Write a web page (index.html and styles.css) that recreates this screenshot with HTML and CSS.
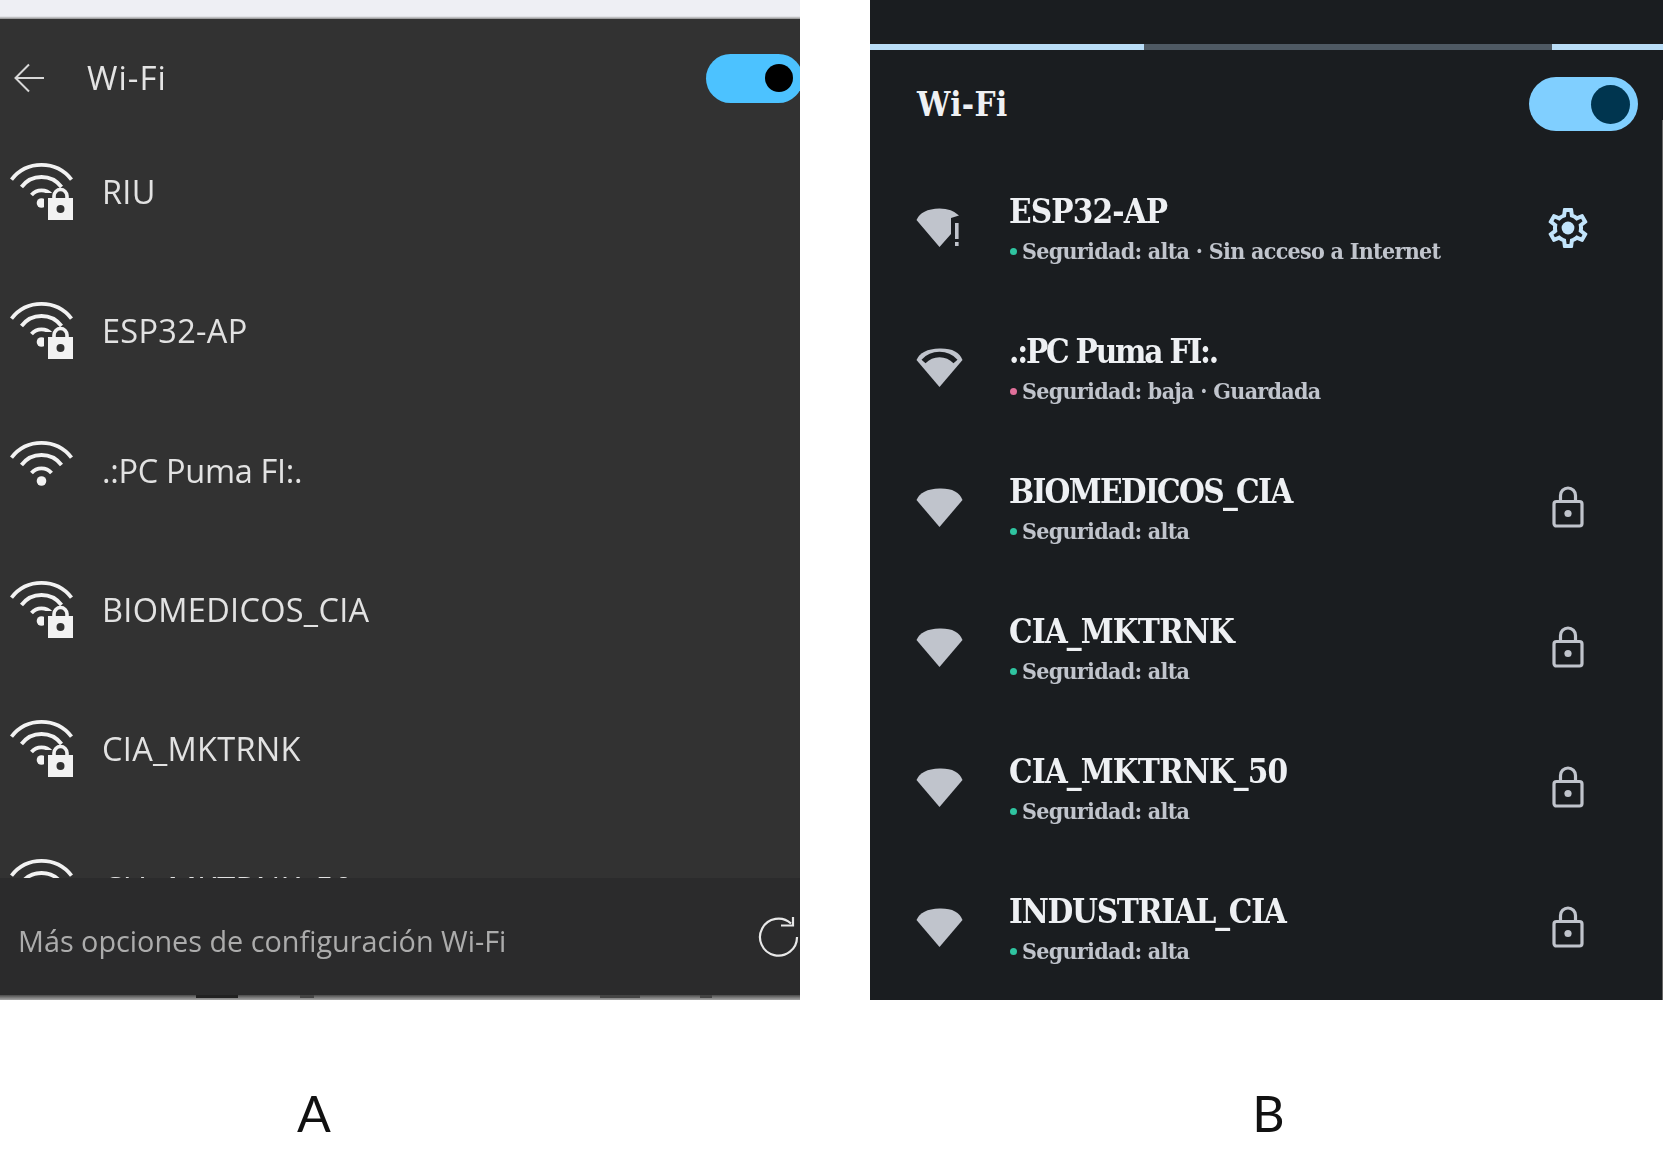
FILE: index.html
```html
<!DOCTYPE html>
<html lang="es">
<head>
    <meta charset="UTF-8">
    <meta name="viewport" content="width=device-width, initial-scale=1.0">
    <title>Wi-Fi A / B</title>
    <link rel="stylesheet" href="styles.css">
</head>
<body>
    <!-- Iconos compartidos -->
    <svg class="defs" width="0" height="0">
        <symbol id="wifi-lock" viewBox="0 0 64 58">
            <path d="M1.5 16.6A38 38 0 0 1 61.5 16.6M11.5 24A25 25 0 0 1 51.5 24M21.5 32A13 13 0 0 1 41.5 32" fill="none" stroke="currentColor" stroke-width="3.8"/>
            <circle cx="31.5" cy="40" r="4.8" fill="currentColor"/>
            <path d="M34 30h33v30H34z" fill="#323232"/>
            <path d="M44 35v-2a6.5 6.5 0 0 1 13 0v2" fill="none" stroke="currentColor" stroke-width="3.6"/>
            <path d="M38 35h25v22H38z" fill="currentColor"/>
            <circle cx="50.5" cy="46" r="4" fill="#323232"/>
        </symbol>
        <symbol id="wifi-open" viewBox="0 0 64 58">
            <path d="M1.5 16.6A38 38 0 0 1 61.5 16.6M11.5 24A25 25 0 0 1 51.5 24M21.5 32A13 13 0 0 1 41.5 32" fill="none" stroke="currentColor" stroke-width="3.8"/>
            <circle cx="31.5" cy="40" r="4.8" fill="currentColor"/>
        </symbol>
        <symbol id="wedge" viewBox="0 0 48 40">
            <path d="M23.5 39L.5 12Q5 1 23.5 .5T46.5 12Z" fill="currentColor"/>
        </symbol>
        <symbol id="wedge-rim" viewBox="0 0 48 40">
            <path d="M23.5 39L.5 12Q5 1 23.5 .5T46.5 12Z" fill="currentColor"/>
            <path d="M7.5 13.5Q14 6.5 23.5 6.5T39.5 13.5" fill="none" stroke="#1a1d20" stroke-width="5.5"/>
        </symbol>
        <symbol id="wedge-alert" viewBox="0 0 48 40">
            <path d="M23.5 39L.5 12Q5 1 23.5 .5Q36 .5 43 7.5L35 10V26Z" fill="currentColor"/>
            <rect x="39" y="15" width="3.6" height="16" fill="currentColor"/>
            <rect x="39" y="34" width="3.6" height="4" fill="currentColor"/>
        </symbol>
        <symbol id="padlock" viewBox="0 0 32 42">
            <rect x="2" y="15.5" width="28" height="24.5" rx="2.5" fill="none" stroke="currentColor" stroke-width="3.2"/>
            <path d="M8.5 15V9.5a7.5 7.5 0 0 1 15 0V15" fill="none" stroke="currentColor" stroke-width="3.2"/>
            <circle cx="16" cy="27.5" r="3.6" fill="currentColor"/>
        </symbol>
    </svg>

    <div class="compare">
        <!-- Captura A -->
        <div class="shot shot-a">
            <div class="panel-a">
                <div class="strip"></div>
                <div class="head-a">
                    <svg class="back" viewBox="0 0 30 30" width="30" height="30">
                        <path d="M30 15H2M15 1.5L1.5 15 15 28.5" fill="none" stroke="currentColor" stroke-width="2"/>
                    </svg>
                    <span class="head-a-title">Wi-Fi</span>
                    <span class="toggle-a"><span class="knob-a"></span></span>
                </div>
                <div class="list-a">
                    <div class="row-a"><svg class="icon-a"><use href="#wifi-lock"/></svg><span>RIU</span></div>
                    <div class="row-a"><svg class="icon-a"><use href="#wifi-lock"/></svg><span>ESP32-AP</span></div>
                    <div class="row-a row-a-tight"><svg class="icon-a"><use href="#wifi-open"/></svg><span>.:PC Puma FI:.</span></div>
                    <div class="row-a"><svg class="icon-a"><use href="#wifi-lock"/></svg><span>BIOMEDICOS_CIA</span></div>
                    <div class="row-a"><svg class="icon-a"><use href="#wifi-lock"/></svg><span>CIA_MKTRNK</span></div>
                    <div class="row-a"><svg class="icon-a"><use href="#wifi-lock"/></svg><span>CIA_MKTRNK_50</span></div>
                </div>
                <div class="foot-a">
                    <span class="foot-a-text">Más opciones de configuración Wi-Fi</span>
                    <svg class="refresh" viewBox="0 0 42 40" width="42" height="40">
                        <path d="M33 6.5A18.5 18.5 0 1 0 39 20" fill="none" stroke="currentColor" stroke-width="2.2"/>
                        <path d="M23 8.5H35V0" fill="none" stroke="currentColor" stroke-width="2.2"/>
                    </svg>
                </div>
                <div class="edge"></div>
            </div>
            <div class="caption caption-a">A</div>
        </div>

        <!-- Captura B -->
        <div class="shot shot-b">
            <div class="panel-b">
                <div class="progress"><span class="seg-on seg-left"></span><span class="seg-off"></span><span class="seg-on"></span></div>
                <div class="head-b">
                    <span class="head-b-title">Wi-Fi</span>
                    <span class="toggle-b"><span class="knob-b"></span></span>
                </div>

                <div class="row-b">
                    <svg class="wedge"><use href="#wedge-alert"/></svg>
                    <div class="info">
                        <div class="name">ESP32-AP</div>
                        <div class="sub"><span class="dot dot-ok"></span>Seguridad: alta · Sin acceso a Internet</div>
                    </div>
                    <svg class="gear" viewBox="0 0 24 24" width="48" height="48">
                        <path fill-rule="evenodd" fill="currentColor" d="M19.43 12.98c.04-.32.07-.64.07-.98 0-.34-.03-.66-.07-.98l2.11-1.65c.19-.15.24-.42.12-.64l-2-3.46c-.09-.16-.26-.25-.44-.25-.06 0-.12.01-.17.03l-2.49 1c-.52-.4-1.08-.73-1.69-.98l-.38-2.65C14.46 2.18 14.25 2 14 2h-4c-.25 0-.46.18-.49.42l-.38 2.65c-.61.25-1.17.59-1.69.98l-2.49-1c-.06-.02-.12-.03-.18-.03-.17 0-.34.09-.43.25l-2 3.46c-.13.22-.07.49.12.64l2.11 1.65c-.04.32-.07.65-.07.98 0 .33.03.66.07.98l-2.11 1.65c-.19.15-.24.42-.12.64l2 3.46c.09.16.26.25.44.25.06 0 .12-.01.17-.03l2.49-1c.52.4 1.08.73 1.69.98l.38 2.65c.03.24.24.42.49.42h4c.25 0 .46-.18.49-.42l.38-2.65c.61-.25 1.17-.59 1.69-.98l2.49 1c.06.02.12.03.18.03.17 0 .34-.09.43-.25l2-3.46c.12-.22.07-.49-.12-.64l-2.11-1.65zm-1.98-1.71c.04.31.05.52.05.73 0 .21-.02.43-.05.73l-.14 1.13.89.7 1.08.84-.7 1.21-1.27-.51-1.04-.42-.9.68c-.43.32-.84.56-1.25.73l-1.06.43-.16 1.13-.2 1.35h-1.4l-.19-1.35-.16-1.13-1.06-.43c-.43-.18-.83-.41-1.23-.71l-.91-.7-1.06.43-1.27.51-.7-1.21 1.08-.84.89-.7-.14-1.13c-.03-.31-.05-.54-.05-.74s.02-.43.05-.73l.14-1.13-.89-.7-1.08-.84.7-1.21 1.27.51 1.04.42.9-.68c.43-.32.84-.56 1.25-.73l1.06-.43.16-1.13.2-1.35h1.39l.19 1.35.16 1.13 1.06.43c.43.18.83.41 1.23.71l.91.7 1.06-.43 1.27-.51.7 1.21-1.07.85-.89.7.14 1.13z"/>
                        <circle cx="12" cy="12" r="3.2" fill="currentColor"/>
                    </svg>
                </div>

                <div class="row-b">
                    <svg class="wedge"><use href="#wedge-rim"/></svg>
                    <div class="info">
                        <div class="name name-tighter">.:PC Puma FI:.</div>
                        <div class="sub"><span class="dot dot-low"></span>Seguridad: baja · Guardada</div>
                    </div>
                </div>

                <div class="row-b">
                    <svg class="wedge"><use href="#wedge"/></svg>
                    <div class="info">
                        <div class="name name-tight">BIOMEDICOS_CIA</div>
                        <div class="sub"><span class="dot dot-ok"></span>Seguridad: alta</div>
                    </div>
                    <svg class="lock"><use href="#padlock"/></svg>
                </div>

                <div class="row-b">
                    <svg class="wedge"><use href="#wedge"/></svg>
                    <div class="info">
                        <div class="name">CIA_MKTRNK</div>
                        <div class="sub"><span class="dot dot-ok"></span>Seguridad: alta</div>
                    </div>
                    <svg class="lock"><use href="#padlock"/></svg>
                </div>

                <div class="row-b">
                    <svg class="wedge"><use href="#wedge"/></svg>
                    <div class="info">
                        <div class="name">CIA_MKTRNK_50</div>
                        <div class="sub"><span class="dot dot-ok"></span>Seguridad: alta</div>
                    </div>
                    <svg class="lock"><use href="#padlock"/></svg>
                </div>

                <div class="row-b">
                    <svg class="wedge"><use href="#wedge"/></svg>
                    <div class="info">
                        <div class="name name-mid">INDUSTRIAL_CIA</div>
                        <div class="sub"><span class="dot dot-ok"></span>Seguridad: alta</div>
                    </div>
                    <svg class="lock"><use href="#padlock"/></svg>
                </div>
                <div class="side-line"></div>
            </div>
            <div class="caption caption-b">B</div>
        </div>
    </div>
</body>
</html>
```

FILE: styles.css
```css
/* Comparacion de dos pantallas Wi-Fi */
body {
    margin: 0;
    background-color: white;
    overflow: hidden;
}

.defs {
    position: absolute;
}

.compare {
    display: flex;
    gap: 70px;
}

.shot-a {
    width: 800px;
}

.shot-b {
    width: 793px;
}

.caption {
    margin-top: 83px;
    font-family: Lato, sans-serif;
    font-size: 50px;
    line-height: 60px;
    color: #111;
    text-align: center;
}

.caption-a {
    padding-right: 172px;
}

.caption-b {
    padding-left: 4px;
}

/* Panel A: la captura original viene algo borrosa */
.panel-a {
    height: 1000px;
    display: flex;
    flex-direction: column;
    overflow: hidden;
    background-color: #323232;
    font-family: "Open Sans", sans-serif;
    color: #e4e4e4;
    filter: blur(0.6px);
}

.strip {
    height: 19px;
    flex: none;
    background: linear-gradient(#eeeff4 85%, #8c8c8c);
}

.head-a {
    height: 88px;
    padding-top: 15px;
    flex: none;
    display: flex;
    align-items: center;
}

.back {
    margin-left: 14px;
    color: #d8d8d8;
}

.head-a-title {
    margin-left: 43px;
    margin-top: -2px;
    font-size: 33px;
    letter-spacing: 1px;
}

.toggle-a {
    margin-left: auto;
    margin-right: -3px;
    width: 97px;
    height: 49px;
    padding-right: 10px;
    box-sizing: border-box;
    flex: none;
    display: flex;
    align-items: center;
    justify-content: flex-end;
    border-radius: 25px;
    background-color: #4cc2ff;
}

.knob-a {
    width: 28px;
    height: 28px;
    border-radius: 50%;
    background-color: black;
}

.list-a {
    flex: 1;
    min-height: 0;
    overflow: hidden;
}

.row-a {
    height: 139.3px;
    display: flex;
    align-items: center;
    gap: 28px;
    padding-left: 10px;
    font-size: 32.5px;
    letter-spacing: 0.3px;
    color: #e2e2e2;
}

.row-a-tight {
    letter-spacing: -0.3px;
}

.icon-a {
    width: 64px;
    height: 58px;
    color: #f2f2f2;
    flex: none;
}

.foot-a {
    height: 117px;
    flex: none;
    display: flex;
    align-items: center;
    justify-content: space-between;
    padding-left: 18px;
    background-color: #2b2b2c;
    font-size: 28.8px;
    color: #acacac;
}

.foot-a-text {
    margin-top: 8px;
}

.refresh {
    margin-right: 0;
    color: #e8e8e8;
}

.edge {
    height: 5px;
    flex: none;
    background:
        linear-gradient(90deg, transparent 196px, #222 196px, #222 238px, transparent 238px, transparent 300px, #444 300px, #444 314px, transparent 314px, transparent 600px, #444 600px, #444 640px, transparent 640px, transparent 700px, #444 700px, #444 712px, transparent 712px) 0 0 / 100% 3px no-repeat,
        linear-gradient(#4a4a4a, #a8a8a8);
}

/* Panel B */
.panel-b {
    position: relative;
    height: 1000px;
    padding-top: 44px;
    box-sizing: border-box;
    overflow: hidden;
    background-color: #1a1d20;
    font-family: "DejaVu Serif Condensed", "DejaVu Serif", serif;
}

.progress {
    height: 6px;
    display: flex;
}

.seg-on {
    flex: 1;
    background-color: #b9ddf7;
}

.seg-left {
    flex: none;
    width: 274px;
}

.seg-off {
    flex: none;
    width: 408px;
    background-color: #4f5a64;
}

.head-b {
    height: 108px;
    padding-left: 47px;
    padding-right: 25px;
    display: flex;
    align-items: center;
    justify-content: space-between;
}

.head-b-title {
    font-size: 33px;
    font-weight: bold;
    letter-spacing: 0.4px;
    color: #eef0f3;
}

.toggle-b {
    width: 109px;
    height: 54px;
    padding-right: 8px;
    box-sizing: border-box;
    display: flex;
    align-items: center;
    justify-content: flex-end;
    border-radius: 27px;
    background-color: #80cfff;
}

.knob-b {
    width: 39px;
    height: 39px;
    border-radius: 50%;
    background-color: #00354f;
}

.row-b {
    height: 140px;
    display: flex;
    align-items: center;
    padding-left: 46px;
}

.wedge {
    width: 48px;
    height: 40px;
    flex: none;
    margin-right: 46px;
    color: #c0c4cc;
}

.info {
    flex: 1;
    margin-top: 2px;
    margin-left: -1px;
    filter: blur(0.3px);
}

.name {
    font-size: 33px;
    line-height: 40px;
    font-weight: bold;
    letter-spacing: -0.9px;
    color: #eef0f3;
}

.name-mid {
    letter-spacing: -1.25px;
}

.name-tight {
    letter-spacing: -1.7px;
}

.name-tighter {
    letter-spacing: -2.2px;
}

.sub {
    display: flex;
    align-items: center;
    margin-top: 4px;
    font-size: 23px;
    line-height: 30px;
    font-weight: bold;
    letter-spacing: -0.7px;
    color: #c0c4cc;
}

.dot {
    width: 7px;
    height: 7px;
    margin-left: 1px;
    margin-right: 5px;
    border-radius: 50%;
}

.dot-ok {
    background-color: #2fc4a0;
}

.dot-low {
    background-color: #e0709a;
}

.gear {
    flex: none;
    margin-right: 71px;
    color: #c2e4fb;
}

.lock {
    width: 32px;
    height: 42px;
    flex: none;
    margin-top: -2px;
    margin-right: 79px;
    color: #c0c4cc;
}

.side-line {
    position: absolute;
    top: 120px;
    right: 0;
    bottom: 0;
    width: 1px;
    background-color: #666;
}
```
